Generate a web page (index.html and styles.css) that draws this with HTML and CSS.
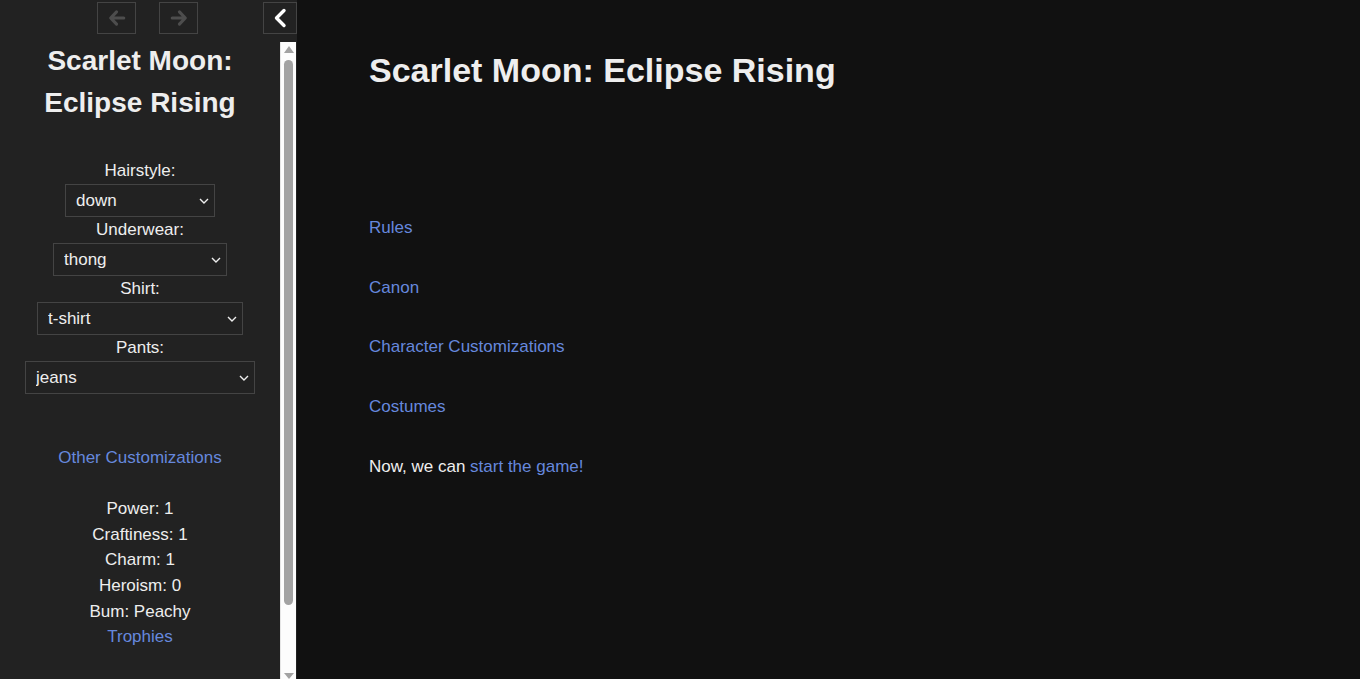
FILE: index.html
```html
<!DOCTYPE html>
<html lang="en">
<head>
    <meta charset="UTF-8">
    <title>Scarlet Moon: Eclipse Rising</title>
    <link rel="stylesheet" href="styles.css">
</head>
<body>
<div class="ui-bar" id="ui-bar">
    <div class="tray">
        <div class="hist">
            <button class="hist-btn" disabled title="Backward">
                <svg width="18" height="18" viewBox="0 0 16 16"><path d="M7.6 2.6L2.4 8l5.2 5.4M3 8h11" fill="none" stroke="currentColor" stroke-width="2.8" stroke-linecap="round" stroke-linejoin="round"/></svg>
            </button>
            <button class="hist-btn" disabled title="Forward">
                <svg width="18" height="18" viewBox="0 0 16 16"><path d="M8.4 2.6L13.6 8l-5.2 5.4M13 8H2" fill="none" stroke="currentColor" stroke-width="2.8" stroke-linecap="round" stroke-linejoin="round"/></svg>
            </button>
        </div>
        <button class="toggle" title="Toggle the UI bar">
            <svg width="16" height="20" viewBox="0 0 16 20"><path d="M12 2.5L4.5 10l7.5 7.5" fill="none" stroke="currentColor" stroke-width="3.4" stroke-linecap="round" stroke-linejoin="round"/></svg>
        </button>
    </div>
    <div class="bar-body">
        <div class="bar-content">
            <h1 class="story-title">Scarlet Moon: Eclipse Rising</h1>

            <div class="outfit">
                <div class="field">
                    <div>Hairstyle:</div>
                    <select class="pick pick-hair"><option>down</option></select>
                </div>
                <div class="field">
                    <div>Underwear:</div>
                    <select class="pick pick-under"><option>thong</option></select>
                </div>
                <div class="field">
                    <div>Shirt:</div>
                    <select class="pick pick-shirt"><option>t-shirt</option></select>
                </div>
                <div class="field">
                    <div>Pants:</div>
                    <select class="pick pick-pants"><option>jeans</option></select>
                </div>
            </div>

            <div class="caption">
                <a href="#">Other Customizations</a><br><br>
                Power: 1<br>
                Craftiness: 1<br>
                Charm: 1<br>
                Heroism: 0<br>
                Bum: Peachy<br>
                <a href="#">Trophies</a>
            </div>
        </div>
        <!-- fake scrollbar, the bar body is a bit taller than the window -->
        <div class="scrollbar">
            <span class="sb-up"></span>
            <span class="sb-thumb"></span>
            <span class="sb-down"></span>
        </div>
    </div>
</div>

<div class="story">
    <h1 class="passage-title">Scarlet Moon: Eclipse Rising</h1>
    <div class="passage">
        <a href="#">Rules</a><br><br>
        <a href="#">Canon</a><br><br>
        <a href="#">Character Customizations</a><br><br>
        <a href="#">Costumes</a><br><br>
        Now, we can <a href="#">start the game!</a>
    </div>
</div>
</body>
</html>
```

FILE: styles.css
```css
*{
    box-sizing: border-box;
}
html,body{
    margin: 0;
    height: 100%;
}
body{
    display: flex;
    overflow: hidden;
    background: #111;
    color: #eee;
    font-family: "Liberation Sans", Arial, sans-serif;
    font-size: 17px;
    line-height: 1.76;
}
a{
    color: #68d;
    text-decoration: none;
}

/* ui bar */
.ui-bar{
    width: 297px;
    height: 679px;
    flex: none;
    display: flex;
    flex-direction: column;
    background: #222;
}
.tray{
    height: 40px;
    flex: none;
    display: flex;
    align-items: flex-start;
    padding-top: 2px;
}
.hist{
    display: flex;
    gap: 23px;
    margin-left: 97px;
}
.tray button{
    height: 32px;
    padding: 0;
    display: flex;
    align-items: center;
    justify-content: center;
    background: transparent;
    border: 1px solid #444;
}
.hist-btn{
    width: 39px;
    color: #4d4d4d;
}
.toggle{
    width: 34px;
    margin-left: auto;
    color: #fff;
    cursor: pointer;
}
.bar-body{
    flex: 1;
    min-height: 0;
    display: flex;
}
.bar-content{
    width: 280px;
    flex: none;
    text-align: center;
    line-height: 1.5;
}
.story-title{
    margin: 0;
    font-size: 28px;
    line-height: 42px;
    font-weight: bold;
}
.outfit{
    margin-top: 34px;
}
.field div{
    line-height: 26px;
}
.pick{
    -webkit-appearance: none;
    appearance: none;
    display: block;
    height: 33px;
    margin: 0 auto;
    padding: 0 24px 0 10px;
    background: #222 url("data:image/svg+xml,%3Csvg xmlns='http://www.w3.org/2000/svg' width='10' height='6' viewBox='0 0 10 6'%3E%3Cpath d='M1 1l4 4 4-4' fill='none' stroke='%23eee' stroke-width='1.4'/%3E%3C/svg%3E") no-repeat right 5px center;
    border: 1px solid #444;
    color: #eee;
    font: inherit;
    font-size: 17px;
}
.pick-hair{ width: 150px; }
.pick-under{ width: 174px; }
.pick-shirt{ width: 206px; }
.pick-pants{ width: 230px; }
.caption{
    margin-top: 51px;
    line-height: 25.6px;
}

/* scrollbar drawn by hand */
.scrollbar{
    width: 16px;
    flex: none;
    margin-top: 2px;
    display: flex;
    flex-direction: column;
    align-items: center;
    background: #fdfdfd;
    border-left: 1px solid #e6e6e6;
}
.sb-up,.sb-down{
    width: 0;
    height: 0;
    border-left: 5px solid transparent;
    border-right: 5px solid transparent;
}
.sb-up{
    margin-top: 4px;
    border-bottom: 7px solid #a3a3a3;
}
.sb-thumb{
    width: 9px;
    height: 545px;
    margin-top: 7px;
    border-radius: 5px;
    background: #a3a3a3;
}
.sb-down{
    margin-top: auto;
    margin-bottom: 0;
    border-top: 6px solid #a3a3a3;
}

/* passage */
.story{
    flex: 1;
    padding-left: 72px;
}
.passage-title{
    margin: 50px 0 0;
    font-size: 34px;
    line-height: 1.2;
    font-weight: bold;
}
.passage{
    margin-top: 122px;
}
```
